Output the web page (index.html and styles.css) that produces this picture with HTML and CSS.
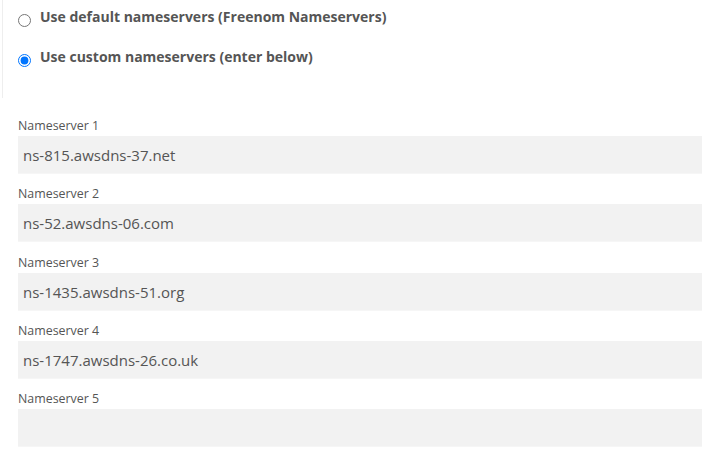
FILE: index.html
```html
<!DOCTYPE html>
<html>
<head>
<meta charset="utf-8">
<link rel="stylesheet" href="styles.css">
</head>
<body>
<div class="options">
  <label class="radio-row">
    <input type="radio" name="ns">
    <span>Use default nameservers (Freenom Nameservers)</span>
  </label>
  <label class="radio-row">
    <input type="radio" name="ns" checked>
    <span>Use custom nameservers (enter below)</span>
  </label>
</div>
<div class="fields">
  <div class="field">
    <div class="lbl">Nameserver 1</div>
    <div class="box">ns-815.awsdns-37.net</div>
  </div>
  <div class="field">
    <div class="lbl">Nameserver 2</div>
    <div class="box">ns-52.awsdns-06.com</div>
  </div>
  <div class="field">
    <div class="lbl">Nameserver 3</div>
    <div class="box">ns-1435.awsdns-51.org</div>
  </div>
  <div class="field">
    <div class="lbl">Nameserver 4</div>
    <div class="box">ns-1747.awsdns-26.co.uk</div>
  </div>
  <div class="field">
    <div class="lbl">Nameserver 5</div>
    <div class="box"></div>
  </div>
</div>
</body>
</html>
```
FILE: styles.css
```css
html, body {
  margin: 0;
  padding: 0;
  background: #fff;
  font-family: "Open Sans", "Liberation Sans", sans-serif;
}
.options {
  margin-left: 2px;
  border-left: 1px solid #eeeeee;
  height: 98px;
  padding-left: 15px;
  padding-top: 7px;
  box-sizing: border-box;
  display: flex;
  flex-direction: column;
  gap: 20px;
}
.radio-row {
  display: flex;
  align-items: flex-start;
  gap: 9px;
  font-weight: 700;
  font-size: 14px;
  color: #555;
  line-height: 20px;
}
.radio-row input {
  margin: 7px 0 0 0;
  width: 13px;
  height: 13px;
}
.fields {
  padding: 19px 0 0 18px;
  display: flex;
  flex-direction: column;
  gap: 11.3px;
}
.field {
  display: flex;
  flex-direction: column;
  gap: 2px;
}
.lbl {
  font-size: 12.4px;
  color: #555;
  line-height: 17px;
}
.box {
  height: 38px;
  background: #f2f2f2;
  border-bottom: 1px solid #f6f6f6;
  box-sizing: border-box;
  padding-left: 5px;
  font-size: 15px;
  line-height: 38px;
  color: #555;
}
```
